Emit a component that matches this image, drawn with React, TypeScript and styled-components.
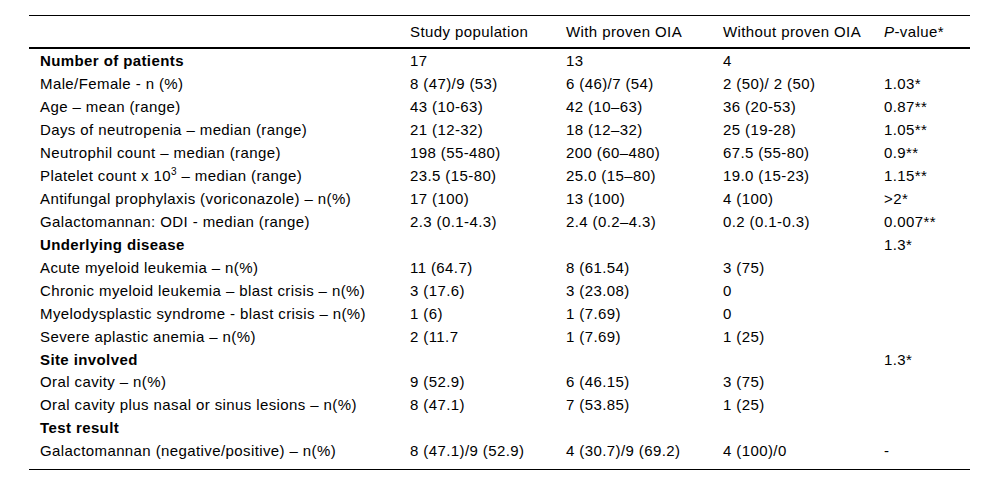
import React from "react";
import styled, { createGlobalStyle } from "styled-components";

const Global = createGlobalStyle`
  html, body { margin: 0; padding: 0; background: #fff; }
  body { font-family: "Liberation Sans", Arial, sans-serif; color: #000; }
`;

const Wrap = styled.div`
  padding: 15px 30px 0 29px;
`;

const Table = styled.table`
  width: 941px;
  border-collapse: collapse;
  table-layout: fixed;
  font-size: 15px;
  letter-spacing: 0.4px;
  line-height: 18.94px;
  border-top: 1px solid #000;
  border-bottom: 1px solid #000;
`;

const HeadCell = styled.th`
  text-align: left;
  font-weight: normal;
  padding: 7.33px 0 4.73px 10px;
  white-space: nowrap;
  border-bottom: 2px solid #000;
  &:first-child { padding-left: 11px; }
`;

const Row = styled.tr<{ $first?: boolean; $last?: boolean }>`
  & > td {
    padding-top: ${(p) => (p.$first ? "3.33px" : "2px")};
    padding-bottom: ${(p) => (p.$last ? "7.7px" : "2px")};
  }
`;

const Cell = styled.td<{ $bold?: boolean }>`
  padding-left: 10px;
  padding-right: 0;
  white-space: nowrap;
  font-weight: ${(p) => (p.$bold ? "bold" : "normal")};
  &:first-child { padding-left: 11px; }
`;

const Sup = styled.sup`
  font-size: 10px;
  line-height: 0;
  vertical-align: 6px;
`;

type R = { label: React.ReactNode; bold?: boolean; v: string[] };

const rows: R[] = [
  { label: "Number of patients", bold: true, v: ["17", "13", "4", ""] },
  { label: "Male/Female - n (%)", v: ["8 (47)/9 (53)", "6 (46)/7 (54)", "2 (50)/ 2 (50)", "1.03*"] },
  { label: "Age – mean (range)", v: ["43 (10-63)", "42 (10–63)", "36 (20-53)", "0.87**"] },
  { label: "Days of neutropenia – median (range)", v: ["21 (12-32)", "18 (12–32)", "25 (19-28)", "1.05**"] },
  { label: "Neutrophil count – median (range)", v: ["198 (55-480)", "200 (60–480)", "67.5 (55-80)", "0.9**"] },
  {
    label: (
      <>
        Platelet count x 10<Sup>3</Sup> – median (range)
      </>
    ),
    v: ["23.5 (15-80)", "25.0 (15–80)", "19.0 (15-23)", "1.15**"],
  },
  { label: "Antifungal prophylaxis (voriconazole) – n(%)", v: ["17 (100)", "13 (100)", "4 (100)", ">2*"] },
  { label: "Galactomannan: ODI - median (range)", v: ["2.3 (0.1-4.3)", "2.4 (0.2–4.3)", "0.2 (0.1-0.3)", "0.007**"] },
  { label: "Underlying disease", bold: true, v: ["", "", "", "1.3*"] },
  { label: "Acute myeloid leukemia – n(%)", v: ["11 (64.7)", "8 (61.54)", "3 (75)", ""] },
  { label: "Chronic myeloid leukemia – blast crisis – n(%)", v: ["3 (17.6)", "3 (23.08)", "0", ""] },
  { label: "Myelodysplastic syndrome - blast crisis – n(%)", v: ["1 (6)", "1 (7.69)", "0", ""] },
  { label: "Severe aplastic anemia – n(%)", v: ["2 (11.7", "1 (7.69)", "1 (25)", ""] },
  { label: "Site involved", bold: true, v: ["", "", "", "1.3*"] },
  { label: "Oral cavity – n(%)", v: ["9 (52.9)", "6 (46.15)", "3 (75)", ""] },
  { label: "Oral cavity plus nasal or sinus lesions – n(%)", v: ["8 (47.1)", "7 (53.85)", "1 (25)", ""] },
  { label: "Test result", bold: true, v: ["", "", "", ""] },
  { label: "Galactomannan (negative/positive) – n(%)", v: ["8 (47.1)/9 (52.9)", "4 (30.7)/9 (69.2)", "4 (100)/0", "-"] },
];

export default function App() {
  return (
    <>
      <Global />
      <Wrap>
        <Table>
          <colgroup>
            <col style={{ width: 371 }} />
            <col style={{ width: 156 }} />
            <col style={{ width: 157 }} />
            <col style={{ width: 161 }} />
            <col style={{ width: 96 }} />
          </colgroup>
          <thead>
            <tr>
              <HeadCell></HeadCell>
              <HeadCell>Study population</HeadCell>
              <HeadCell>With proven OIA</HeadCell>
              <HeadCell>Without proven OIA</HeadCell>
              <HeadCell>
                <i>P</i>-value*
              </HeadCell>
            </tr>
          </thead>
          <tbody>
            {rows.map((r, i) => (
              <Row key={i} $first={i === 0} $last={i === rows.length - 1}>
                <Cell $bold={r.bold}>{r.label}</Cell>
                {r.v.map((x, j) => (
                  <Cell key={j}>{x}</Cell>
                ))}
              </Row>
            ))}
          </tbody>
        </Table>
      </Wrap>
    </>
  );
}
